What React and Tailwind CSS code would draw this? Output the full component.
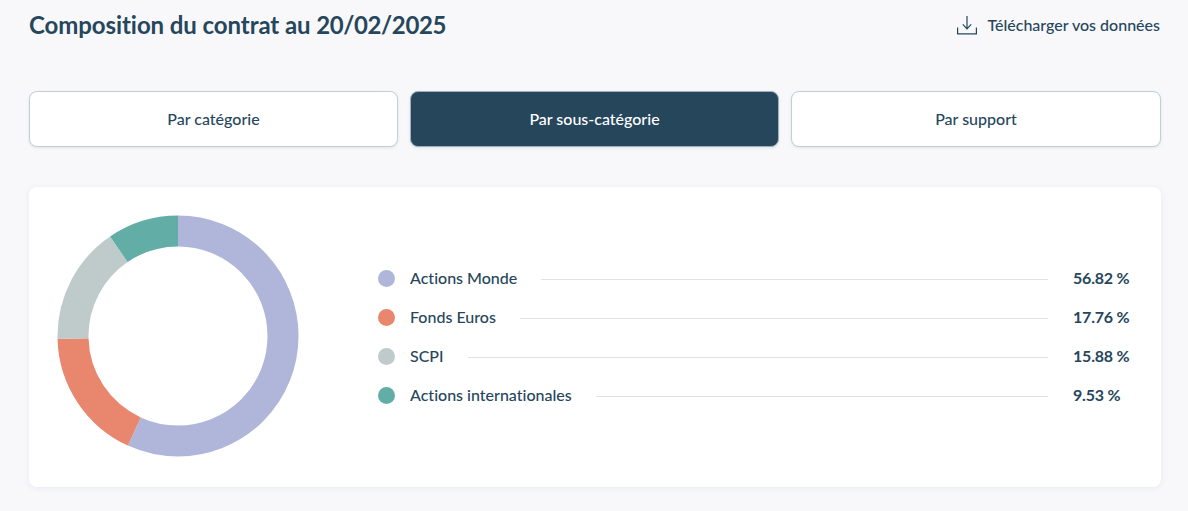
import React from 'react';

const items = [
  { label: 'Actions Monde', value: '56.82 %', pct: 56.82, dot: 'bg-[#afb6da]', color: '#afb6da' },
  { label: 'Fonds Euros', value: '17.76 %', pct: 17.76, dot: 'bg-[#e8876d]', color: '#e8876d' },
  { label: 'SCPI', value: '15.88 %', pct: 15.88, dot: 'bg-[#bfcbca]', color: '#bfcbca' },
  { label: 'Actions internationales', value: '9.53 %', pct: 9.53, dot: 'bg-[#62aea7]', color: '#62aea7' },
];

function Donut() {
  let offset = 0;
  return (
    <svg width="242" height="242" viewBox="0 0 242 242" className="shrink-0 mb-[2px]">
      <g transform="rotate(-90 121 121)">
        {items.map((item) => {
          const circle = (
            <circle
              key={item.label}
              cx="121"
              cy="121"
              r="105"
              fill="none"
              stroke={item.color}
              strokeWidth="31"
              pathLength="99.99"
              strokeDasharray={`${item.pct} ${99.99 - item.pct}`}
              strokeDashoffset={-offset}
            />
          );
          offset += item.pct;
          return circle;
        })}
      </g>
    </svg>
  );
}

function Tab({ label, active, className }) {
  return (
    <button
      className={`${className} h-[56px] rounded-lg border text-[16px] font-medium shadow-[0_1px_3px_rgba(36,70,93,0.12)] ${
        active ? 'bg-[#26465c] border-[#9fb0bc] text-white' : 'bg-white border-[#c3ced5] text-[#26465c]'
      }`}
    >
      {label}
    </button>
  );
}

export default function App() {
  return (
    <div className="h-[511px] overflow-hidden bg-[#f8f8fb] pl-[29px] pr-[27px] text-[#26465c] font-['Lato',sans-serif] [font-variant-ligatures:none]">
      <div className="pt-[9px] flex items-center justify-between h-[32px] box-content">
        <h1 className="text-[24px] font-bold leading-[32px] -mt-[1px] tracking-[-0.08px]">
          Composition du contrat au <span className="tracking-[-0.4px]">20/02/2025</span>
        </h1>
        <a className="flex items-center gap-[10px] text-[16px] font-medium mr-[1px]">
          <svg width="20" height="20" viewBox="0 0 20 20" fill="none" stroke="currentColor" strokeWidth="1.2" className="mt-[1px]">
            <path d="M10 0v12.5M5.8 8.4 10 12.8l4.2-4.4" />
            <path d="M.6 11.5v6.4h18.8v-6.4" />
          </svg>
          Télécharger vos données
        </a>
      </div>

      <div className="mt-[50px] flex gap-[12px]">
        <Tab label="Par catégorie" className="w-[369px]" />
        <Tab label="Par sous-catégorie" active className="w-[369px]" />
        <Tab label="Par support" className="flex-1" />
      </div>

      <div className="mt-[40px] h-[300px] rounded-lg bg-white shadow-[0_1px_6px_rgba(36,70,93,0.08)] flex items-center pl-[28px] pr-[31px]">
        <Donut />
        <div className="ml-[79px] flex-1 flex flex-col gap-[15px]">
          {items.map((item) => (
            <div key={item.label} className="flex items-center h-[24px] text-[16px]">
              <span className={`w-[17px] h-[17px] rounded-full shrink-0 -mt-[1px] ${item.dot}`} />
              <span className="ml-[15px] whitespace-nowrap font-medium -mt-[2px]">{item.label}</span>
              <span className="flex-1 ml-[24px] h-px mt-[1px] bg-[#e0e3e5]" />
              <span className="ml-[25px] w-[57px] font-bold tracking-[-0.2px] whitespace-nowrap -mt-[2px]">{item.value}</span>
            </div>
          ))}
        </div>
      </div>
    </div>
  );
}
